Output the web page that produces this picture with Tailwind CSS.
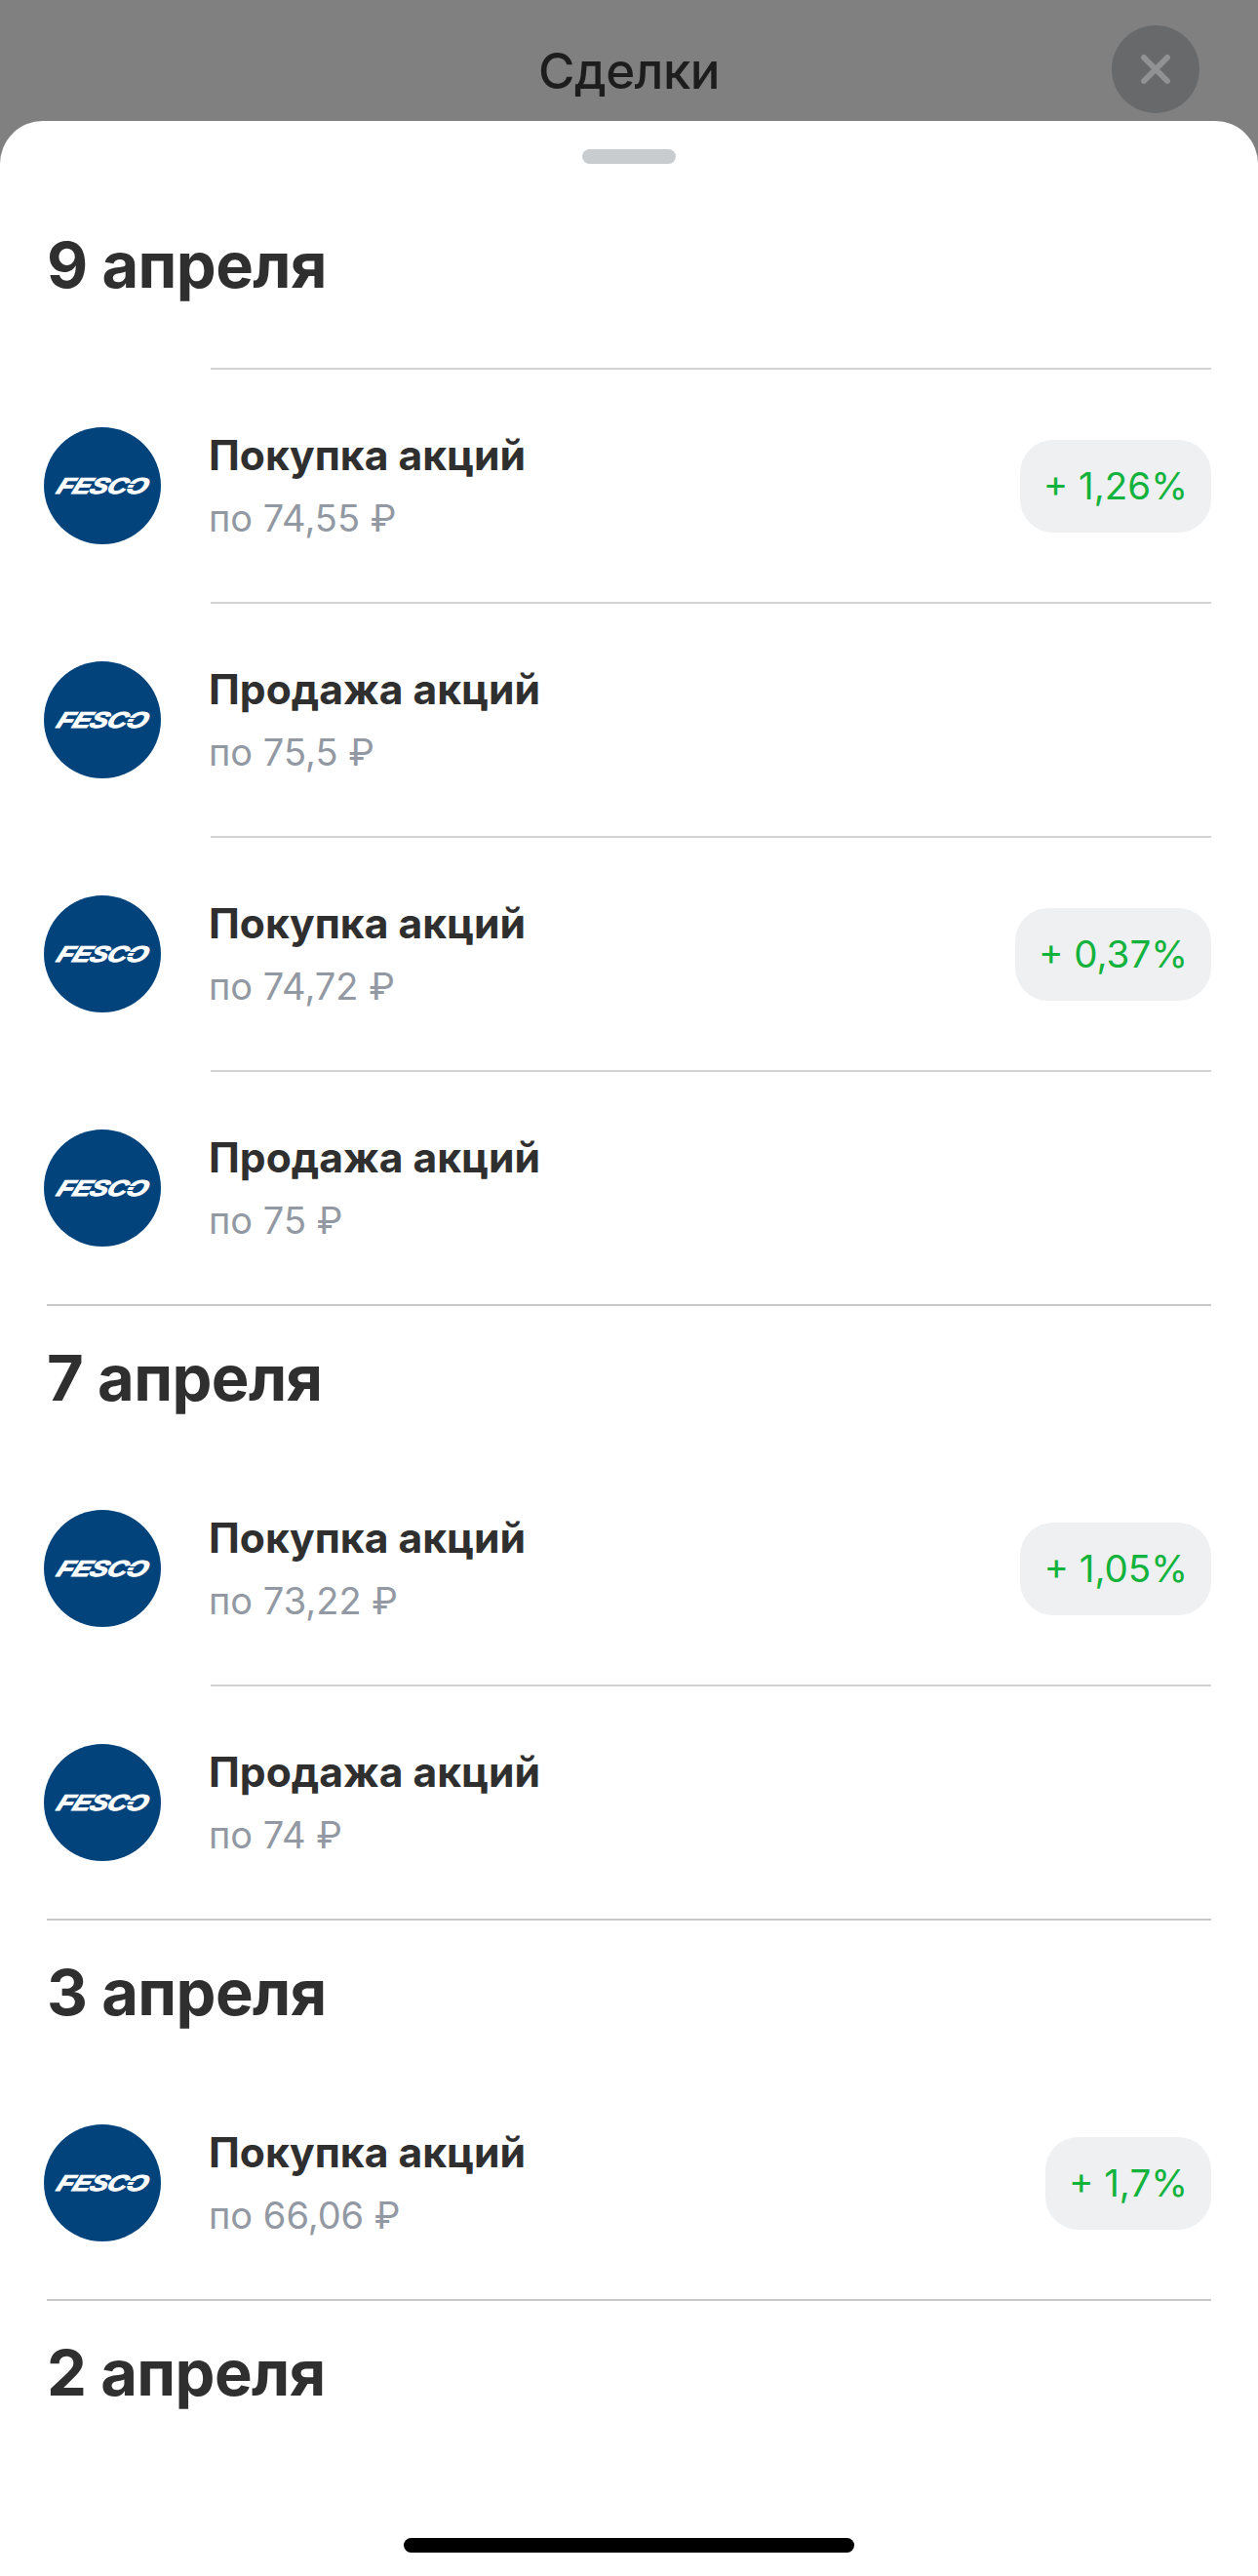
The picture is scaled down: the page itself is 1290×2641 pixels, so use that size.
<!DOCTYPE html>
<html lang="ru">
  <head>
    <meta charset="UTF-8" />
    <meta name="viewport" content="width=device-width, initial-scale=1.0" />
    <title>Сделки</title>
    <script src="https://cdn.jsdelivr.net/npm/@tailwindcss/browser@4"></script>
  </head>
  <body class="bg-[#808080] font-['Inter',sans-serif] text-[#2f2f2f]">
    <div class="w-[1290px] h-[2641px] overflow-hidden flex flex-col">
      <!-- top bar -->
      <header class="relative h-[124px] shrink-0 flex items-center justify-center pt-[20px]">
        <h1 class="text-[51px] leading-none font-medium text-[#1d1d1d] tracking-[-0.5px]">Сделки</h1>
        <button class="absolute left-[1140px] top-[26px] w-[90px] h-[90px] rounded-full bg-[#68696b] flex items-center justify-center" type="button">
          <svg class="w-[32px] h-[32px]" viewBox="0 0 32 32" fill="none" stroke="#909294" stroke-width="6" stroke-linecap="round"><path d="M4 4 28 28M28 4 4 28" /></svg>
        </button>
      </header>

      <!-- sheet -->
      <main class="relative flex-1 bg-white rounded-t-[44px]">
        <div class="pt-[29px] flex justify-center">
          <div class="w-[96px] h-[15px] rounded-full bg-[#c8cccf]"></div>
        </div>

        <section>
          <h2 class="h-[209px] pt-[62px] pl-[48px] text-[65px] leading-[84px] font-bold tracking-[-0.6px]">9 апреля</h2>

          <div class="h-[240px] pl-[45px] pr-[48px] flex">
            <div class="relative w-[120px] h-[120px] self-center mt-[2px] mr-[51px] shrink-0 rounded-full bg-[#03437c] flex items-center justify-center overflow-hidden">
              <span class="text-white text-[23px] leading-none font-bold italic tracking-[-0.5px] -skew-x-[18deg] scale-x-[1.2] [-webkit-text-stroke:1px_white] font-['Liberation_Sans',sans-serif]">FESCO</span>
              <span class="absolute left-[83px] top-[58px] w-[13px] h-[5px] border-y border-[#03437c]"></span>
            </div>
            <div class="flex-1 border-t-2 border-[#d2d2d2] flex items-center justify-between">
              <div class="pt-[2px] -ml-[2px]">
                <div class="text-[42.6px] leading-[50px] font-[650]">Покупка акций</div>
                <div class="mt-[14px] text-[38px] leading-[50px] text-[#9299a3]">по 74,55 ₽</div>
              </div>
              <div class="h-[95px] px-[24px] pt-[2px] rounded-[34px] bg-[#eef0f2] flex items-center text-[38.5px] text-[#12b33c]">+ 1,26%</div>
            </div>
          </div>

          <div class="h-[240px] pl-[45px] pr-[48px] flex">
            <div class="relative w-[120px] h-[120px] self-center mt-[2px] mr-[51px] shrink-0 rounded-full bg-[#03437c] flex items-center justify-center overflow-hidden">
              <span class="text-white text-[23px] leading-none font-bold italic tracking-[-0.5px] -skew-x-[18deg] scale-x-[1.2] [-webkit-text-stroke:1px_white] font-['Liberation_Sans',sans-serif]">FESCO</span>
              <span class="absolute left-[83px] top-[58px] w-[13px] h-[5px] border-y border-[#03437c]"></span>
            </div>
            <div class="flex-1 border-t-2 border-[#d2d2d2] flex items-center justify-between">
              <div class="pt-[2px] -ml-[2px]">
                <div class="text-[42.6px] leading-[50px] font-[650]">Продажа акций</div>
                <div class="mt-[14px] text-[38px] leading-[50px] text-[#9299a3]">по 75,5 ₽</div>
              </div>
            </div>
          </div>

          <div class="h-[240px] pl-[45px] pr-[48px] flex">
            <div class="relative w-[120px] h-[120px] self-center mt-[2px] mr-[51px] shrink-0 rounded-full bg-[#03437c] flex items-center justify-center overflow-hidden">
              <span class="text-white text-[23px] leading-none font-bold italic tracking-[-0.5px] -skew-x-[18deg] scale-x-[1.2] [-webkit-text-stroke:1px_white] font-['Liberation_Sans',sans-serif]">FESCO</span>
              <span class="absolute left-[83px] top-[58px] w-[13px] h-[5px] border-y border-[#03437c]"></span>
            </div>
            <div class="flex-1 border-t-2 border-[#d2d2d2] flex items-center justify-between">
              <div class="pt-[2px] -ml-[2px]">
                <div class="text-[42.6px] leading-[50px] font-[650]">Покупка акций</div>
                <div class="mt-[14px] text-[38px] leading-[50px] text-[#9299a3]">по 74,72 ₽</div>
              </div>
              <div class="h-[95px] px-[24px] pt-[2px] rounded-[34px] bg-[#eef0f2] flex items-center text-[38.5px] text-[#12b33c]">+ 0,37%</div>
            </div>
          </div>

          <div class="h-[240px] pl-[45px] pr-[48px] flex">
            <div class="relative w-[120px] h-[120px] self-center mt-[2px] mr-[51px] shrink-0 rounded-full bg-[#03437c] flex items-center justify-center overflow-hidden">
              <span class="text-white text-[23px] leading-none font-bold italic tracking-[-0.5px] -skew-x-[18deg] scale-x-[1.2] [-webkit-text-stroke:1px_white] font-['Liberation_Sans',sans-serif]">FESCO</span>
              <span class="absolute left-[83px] top-[58px] w-[13px] h-[5px] border-y border-[#03437c]"></span>
            </div>
            <div class="flex-1 border-t-2 border-[#d2d2d2] flex items-center justify-between">
              <div class="pt-[2px] -ml-[2px]">
                <div class="text-[42.6px] leading-[50px] font-[650]">Продажа акций</div>
                <div class="mt-[14px] text-[38px] leading-[50px] text-[#9299a3]">по 75 ₽</div>
              </div>
            </div>
          </div>
        </section>

        <section class="ml-[48px] mr-[48px] border-t-2 border-[#c8c8c8]">
          <h2 class="h-[148px] pt-[32px] text-[65px] leading-[84px] font-bold tracking-[-0.6px]">7 апреля</h2>
        </section>
        <section>
          <div class="h-[240px] pl-[45px] pr-[48px] flex">
            <div class="relative w-[120px] h-[120px] self-center mt-[2px] mr-[51px] shrink-0 rounded-full bg-[#03437c] flex items-center justify-center overflow-hidden">
              <span class="text-white text-[23px] leading-none font-bold italic tracking-[-0.5px] -skew-x-[18deg] scale-x-[1.2] [-webkit-text-stroke:1px_white] font-['Liberation_Sans',sans-serif]">FESCO</span>
              <span class="absolute left-[83px] top-[58px] w-[13px] h-[5px] border-y border-[#03437c]"></span>
            </div>
            <div class="flex-1 border-t-2 border-transparent flex items-center justify-between">
              <div class="pt-[2px] -ml-[2px]">
                <div class="text-[42.6px] leading-[50px] font-[650]">Покупка акций</div>
                <div class="mt-[14px] text-[38px] leading-[50px] text-[#9299a3]">по 73,22 ₽</div>
              </div>
              <div class="h-[95px] px-[24px] pt-[2px] rounded-[34px] bg-[#eef0f2] flex items-center text-[38.5px] text-[#12b33c]">+ 1,05%</div>
            </div>
          </div>

          <div class="h-[240px] pl-[45px] pr-[48px] flex">
            <div class="relative w-[120px] h-[120px] self-center mt-[2px] mr-[51px] shrink-0 rounded-full bg-[#03437c] flex items-center justify-center overflow-hidden">
              <span class="text-white text-[23px] leading-none font-bold italic tracking-[-0.5px] -skew-x-[18deg] scale-x-[1.2] [-webkit-text-stroke:1px_white] font-['Liberation_Sans',sans-serif]">FESCO</span>
              <span class="absolute left-[83px] top-[58px] w-[13px] h-[5px] border-y border-[#03437c]"></span>
            </div>
            <div class="flex-1 border-t-2 border-[#d2d2d2] flex items-center justify-between">
              <div class="pt-[2px] -ml-[2px]">
                <div class="text-[42.6px] leading-[50px] font-[650]">Продажа акций</div>
                <div class="mt-[14px] text-[38px] leading-[50px] text-[#9299a3]">по 74 ₽</div>
              </div>
            </div>
          </div>
        </section>

        <section class="ml-[48px] mr-[48px] border-t-2 border-[#c8c8c8]">
          <h2 class="h-[148px] pt-[32px] text-[65px] leading-[84px] font-bold tracking-[-0.6px]">3 апреля</h2>
        </section>
        <section>
          <div class="h-[240px] pl-[45px] pr-[48px] flex">
            <div class="relative w-[120px] h-[120px] self-center mt-[2px] mr-[51px] shrink-0 rounded-full bg-[#03437c] flex items-center justify-center overflow-hidden">
              <span class="text-white text-[23px] leading-none font-bold italic tracking-[-0.5px] -skew-x-[18deg] scale-x-[1.2] [-webkit-text-stroke:1px_white] font-['Liberation_Sans',sans-serif]">FESCO</span>
              <span class="absolute left-[83px] top-[58px] w-[13px] h-[5px] border-y border-[#03437c]"></span>
            </div>
            <div class="flex-1 border-t-2 border-transparent flex items-center justify-between">
              <div class="pt-[2px] -ml-[2px]">
                <div class="text-[42.6px] leading-[50px] font-[650]">Покупка акций</div>
                <div class="mt-[14px] text-[38px] leading-[50px] text-[#9299a3]">по 66,06 ₽</div>
              </div>
              <div class="h-[95px] px-[24px] pt-[2px] rounded-[34px] bg-[#eef0f2] flex items-center text-[38.5px] text-[#12b33c]">+ 1,7%</div>
            </div>
          </div>
        </section>

        <section class="ml-[48px] mr-[48px] border-t-2 border-[#c8c8c8]">
          <h2 class="h-[148px] pt-[32px] text-[65px] leading-[84px] font-bold tracking-[-0.6px]">2 апреля</h2>
        </section>

        <!-- home indicator -->
        <div class="absolute left-[414px] bottom-[24px] w-[462px] h-[15px] rounded-full bg-black"></div>
      </main>
    </div>
  </body>
</html>
